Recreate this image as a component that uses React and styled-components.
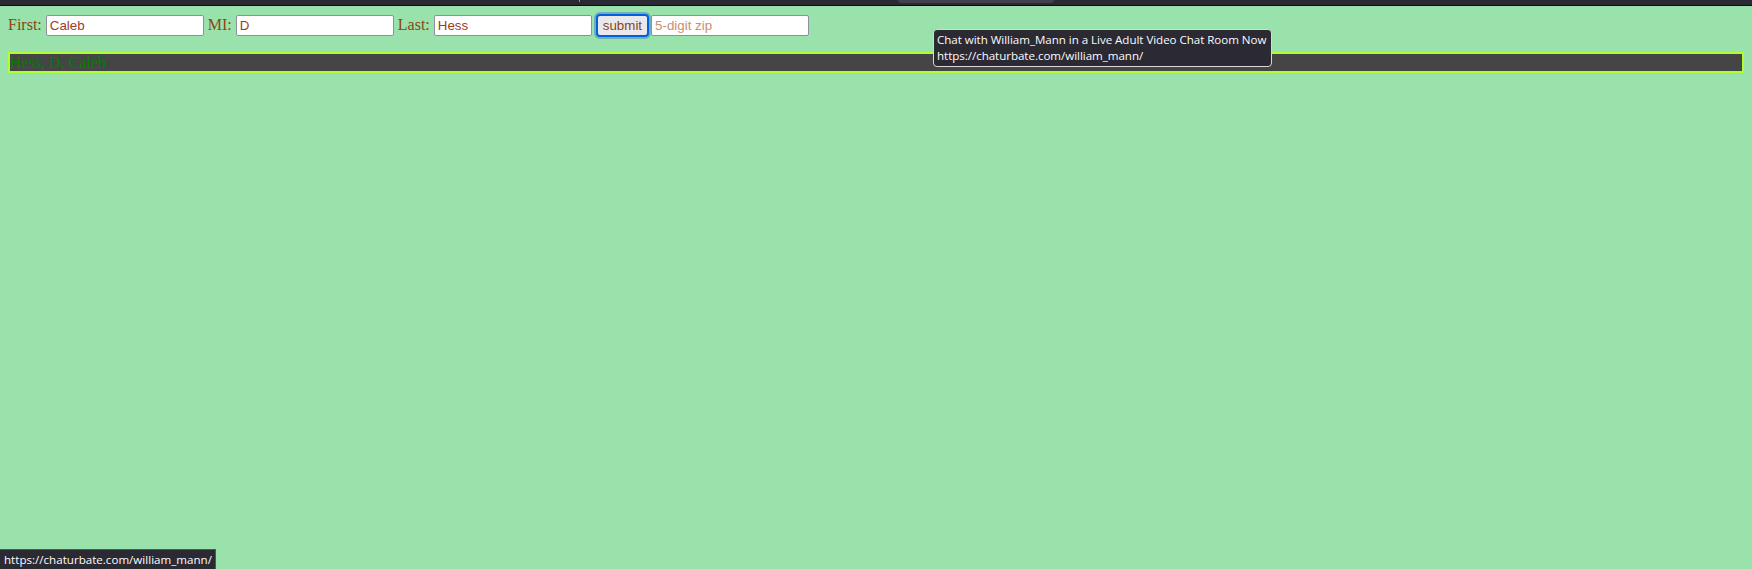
import React from "react";
import styled, { createGlobalStyle } from "styled-components";

const Global = createGlobalStyle`
  html, body { margin: 0; padding: 0; }
  html { background: #9ae2ab; }
  body {
    background: #9ae2ab;
    font-family: "Liberation Serif", "Times New Roman", serif;
    font-size: 16px;
    min-height: 569px;
    overflow: hidden;
  }
`;

const ChromeStrip = styled.div`
  height: 5px;
  background: #2b2a33;
  border-bottom: 1px solid #0c0c0d;
  display: flex;
  align-items: flex-start;
  padding-left: 579px;
`;

const Tick = styled.span`
  width: 1px;
  height: 2px;
  background: #8f8f9d;
`;

const TabEdge = styled.span`
  margin-left: 318px;
  width: 156px;
  height: 3px;
  background: #42414d;
  border-radius: 0 0 4px 4px;
`;

const Page = styled.div`
  padding: 8px;
`;

const Form = styled.form`
  margin: 0 0 16px;
  line-height: 22px;
  height: 22px;
`;

const Label = styled.span`
  color: #8b4513;
  font-size: 16px;
  vertical-align: baseline;
`;

const Field = styled.input`
  box-sizing: border-box;
  width: 158px;
  height: 21px;
  margin: 0;
  padding: 1px 3px;
  border: 1px solid #8f8f9d;
  border-radius: 2px;
  background: #fff;
  color: #9a3d1e;
  font-family: "Liberation Sans", Arial, sans-serif;
  font-size: 13.33px;
  vertical-align: baseline;
  outline: none;
  &::placeholder { color: #c9906e; opacity: 1; }
`;

const Submit = styled.button`
  box-sizing: border-box;
  height: 23px;
  margin: 0 2px 0 4px;
  padding: 0 5px;
  border: 2px solid #0060df;
  border-radius: 4px;
  background: #e9e9ed;
  box-shadow: 0 0 0 2px #6fb0b8;
  color: #8b4513;
  font-family: "Liberation Sans", Arial, sans-serif;
  font-size: 13.33px;
  vertical-align: baseline;
`;

const Result = styled.div`
  border: 2px solid #adff2f;
  background: #454545;
  color: #008000;
  font-size: 16px;
  line-height: 17px;
`;

const Tooltip = styled.div`
  position: absolute;
  left: 933px;
  top: 29px;
  box-sizing: border-box;
  width: 339px;
  height: 38px;
  padding: 2px 3px;
  background: #2b2a33;
  border: 1px solid #d8d8dc;
  border-radius: 4px;
  color: #fbfbfe;
  font-family: "Open Sans", "Noto Sans", sans-serif;
  font-size: 11.6px;
  line-height: 16px;
  white-space: nowrap;
  letter-spacing: -0.05px;
`;

const StatusBar = styled.div`
  position: absolute;
  left: 0;
  top: 549px;
  box-sizing: border-box;
  height: 20px;
  width: 216px;
  padding: 0 4px;
  background: #2b2a33;
  border-top: 1px solid #55545c;
  border-right: 1px solid #55545c;
  color: #fbfbfe;
  font-family: "Open Sans", "Noto Sans", sans-serif;
  font-size: 11.6px;
  line-height: 19px;
  white-space: nowrap;
`;

export default function App() {
  return (
    <>
      <Global />
      <ChromeStrip>
        <Tick />
        <TabEdge />
      </ChromeStrip>
      <Page>
        <Form onSubmit={(e) => e.preventDefault()}>
          <Label>First:</Label> <Field defaultValue="Caleb" />{" "}
          <Label>MI:</Label> <Field defaultValue="D" />{" "}
          <Label>Last:</Label> <Field defaultValue="Hess" />
          <Submit type="submit">submit</Submit>
          <Field placeholder="5-digit zip" />
        </Form>
        <Result>Hess, D. Caleb</Result>
      </Page>
      <Tooltip>
        Chat with William_Mann in a Live Adult Video Chat Room Now
        <br />
        https://chaturbate.com/william_mann/
      </Tooltip>
      <StatusBar>https://chaturbate.com/william_mann/</StatusBar>
    </>
  );
}
